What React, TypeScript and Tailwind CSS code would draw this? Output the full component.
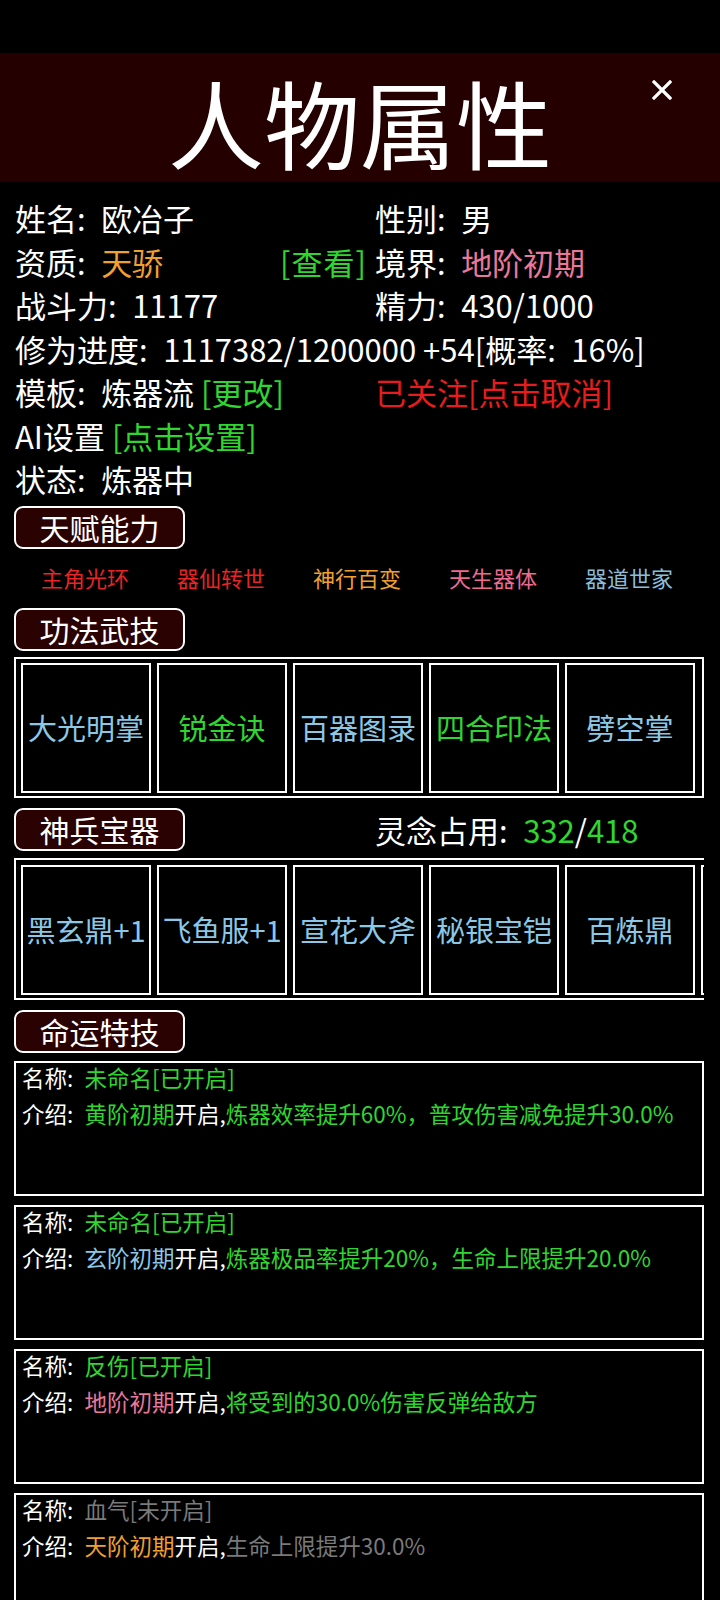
import React from "react";

const GREEN = "text-[#2fd62f]";
// label colon + wide space, as in the game UI
const C = ":\u2002";

function SectionTag({ label }: { label: string }) {
  return (
    <div className="flex h-[43px] w-[171px] items-center justify-center rounded-[9px] border-2 border-white bg-[#2a0202] text-[30px] leading-none text-white">
      {label}
    </div>
  );
}

type Cell = { name: string; color: string };

const skills: Cell[] = [
  { name: "大光明掌", color: "text-[#8cc8e6]" },
  { name: "锐金诀", color: "text-[#2fd62f]" },
  { name: "百器图录", color: "text-[#8cc8e6]" },
  { name: "四合印法", color: "text-[#2fd62f]" },
  { name: "劈空掌", color: "text-[#8cc8e6]" },
];

const gear: Cell[] = [
  { name: "黑玄鼎+1", color: "text-[#8cc8e6]" },
  { name: "飞鱼服+1", color: "text-[#8cc8e6]" },
  { name: "宣花大斧", color: "text-[#8cc8e6]" },
  { name: "秘银宝铠", color: "text-[#8cc8e6]" },
  { name: "百炼鼎", color: "text-[#8cc8e6]" },
  { name: "", color: "text-[#8cc8e6]" },
];

const talents: Cell[] = [
  { name: "主角光环", color: "text-[#e82424]" },
  { name: "器仙转世", color: "text-[#e82424]" },
  { name: "神行百变", color: "text-[#f0a030]" },
  { name: "天生器体", color: "text-[#ee6a90]" },
  { name: "器道世家", color: "text-[#8cbcd8]" },
];

type Fate = {
  name: string;
  on: boolean;
  stage: string;
  stageColor: string;
  desc: string;
};

const fates: Fate[] = [
  {
    name: "未命名[已开启]",
    on: true,
    stage: "黄阶初期",
    stageColor: "text-[#2fd62f]",
    desc: "炼器效率提升60%，普攻伤害减免提升30.0%",
  },
  {
    name: "未命名[已开启]",
    on: true,
    stage: "玄阶初期",
    stageColor: "text-[#8cc8e6]",
    desc: "炼器极品率提升20%，生命上限提升20.0%",
  },
  {
    name: "反伤[已开启]",
    on: true,
    stage: "地阶初期",
    stageColor: "text-[#e8789c]",
    desc: "将受到的30.0%伤害反弹给敌方",
  },
  {
    name: "血气[未开启]",
    on: false,
    stage: "天阶初期",
    stageColor: "text-[#f0a030]",
    desc: "生命上限提升30.0%",
  },
];

function ItemBox({ items, clipped }: { items: Cell[]; clipped?: boolean }) {
  return (
    <div
      className={
        clipped
          ? "flex h-[142px] w-[690px] gap-[6px] overflow-hidden border-y-2 border-l-2 border-white pl-[5px] pt-[5px] pb-[3px]"
          : "flex h-[141px] w-[690px] gap-[6px] overflow-hidden border-2 border-white pl-[5px] pt-[4px] pb-[3px]"
      }
    >
      {items.map((it, i) => (
        <div
          key={i}
          className={`flex h-full w-[130px] shrink-0 items-center justify-center border-2 border-white text-[29px] leading-none whitespace-nowrap ${it.color}`}
        >
          {it.name}
        </div>
      ))}
    </div>
  );
}

export default function App() {
  return (
    <div className="h-[1600px] w-[720px] overflow-hidden bg-black font-['Noto_Sans_CJK_SC',sans-serif] text-white">
      {/* status bar space */}
      <div className="h-[53px]" />

      {/* title bar */}
      <div className="relative flex h-[129px] items-center justify-center bg-[#240000]">
        <h1 className="mt-[6px] text-[96px] leading-none">人物属性</h1>
        <button className="absolute right-[48px] top-[27px]" aria-label="close">
          <svg width="20" height="20" viewBox="0 0 20 20">
            <path d="M2 2 L18 18 M18 2 L2 18" stroke="white" strokeWidth="3.2" strokeLinecap="square" />
          </svg>
        </button>
      </div>

      {/* basic info */}
      <div className="grid grid-cols-[360px_345px] pl-[15px] pt-[14px] text-[31px] leading-[43.5px]">
        <div>姓名{C}欧冶子</div>
        <div>性别{C}男</div>

        <div className="flex justify-between pr-[8px]">
          <span>
            资质{C}<span className="text-[#f0a030]">天骄</span>
          </span>
          <span className={`${GREEN} tracking-[1px]`}>[查看]</span>
        </div>
        <div>
          境界{C}<span className="text-[#e8789c]">地阶初期</span>
        </div>

        <div>战斗力{C}11177</div>
        <div>精力{C}430/1000</div>

        <div className="col-span-2 whitespace-nowrap">修为进度{C}1117382/1200000 +54[概率{C}16%]</div>

        <div>
          模板{C}炼器流 <span className={GREEN}>[更改]</span>
        </div>
        <div className="text-[#e81c1c]">已关注[点击取消]</div>

        <div className="col-span-2">
          AI设置 <span className={GREEN}>[点击设置]</span>
        </div>

        <div className="col-span-2">状态{C}炼器中</div>
      </div>

      <div className="pl-[14px] pt-[5px]">
        <SectionTag label="天赋能力" />

        <div className="ml-[3px] grid h-[56px] w-[680px] grid-cols-5 items-center text-center text-[22px] leading-none">
          {talents.map((t) => (
            <span key={t.name} className={t.color}>
              {t.name}
            </span>
          ))}
        </div>

        <div className="mt-[3px]">
          <SectionTag label="功法武技" />
        </div>
        <div className="mt-[6px]">
          <ItemBox items={skills} />
        </div>

        <div className="mt-[10px] flex items-center">
          <SectionTag label="神兵宝器" />
          <div className="ml-[190px] text-[31px] leading-none">
            灵念占用{C}<span className={GREEN}>332</span>/<span className={GREEN}>418</span>
          </div>
        </div>
        <div className="mt-[7px]">
          <ItemBox items={gear} clipped />
        </div>

        <div className="mt-[10px]">
          <SectionTag label="命运特技" />
        </div>

        <div className="mt-[8px] flex flex-col gap-[9px]">
          {fates.map((f, i) => (
            <div
              key={i}
              className="flex h-[135px] w-[690px] shrink-0 flex-col gap-[8px] border-2 border-white pl-[6px] text-[22.5px] leading-[28px]"
            >
              <div>
                名称{C}<span className={f.on ? GREEN : "text-[#7a7a7a]"}>{f.name}</span>
              </div>
              <div className="whitespace-nowrap">
                介绍{C}<span className={f.stageColor}>{f.stage}</span>开启,
                <span className={f.on ? GREEN : "text-[#7a7a7a]"}>{f.desc}</span>
              </div>
            </div>
          ))}
        </div>
      </div>
    </div>
  );
}
